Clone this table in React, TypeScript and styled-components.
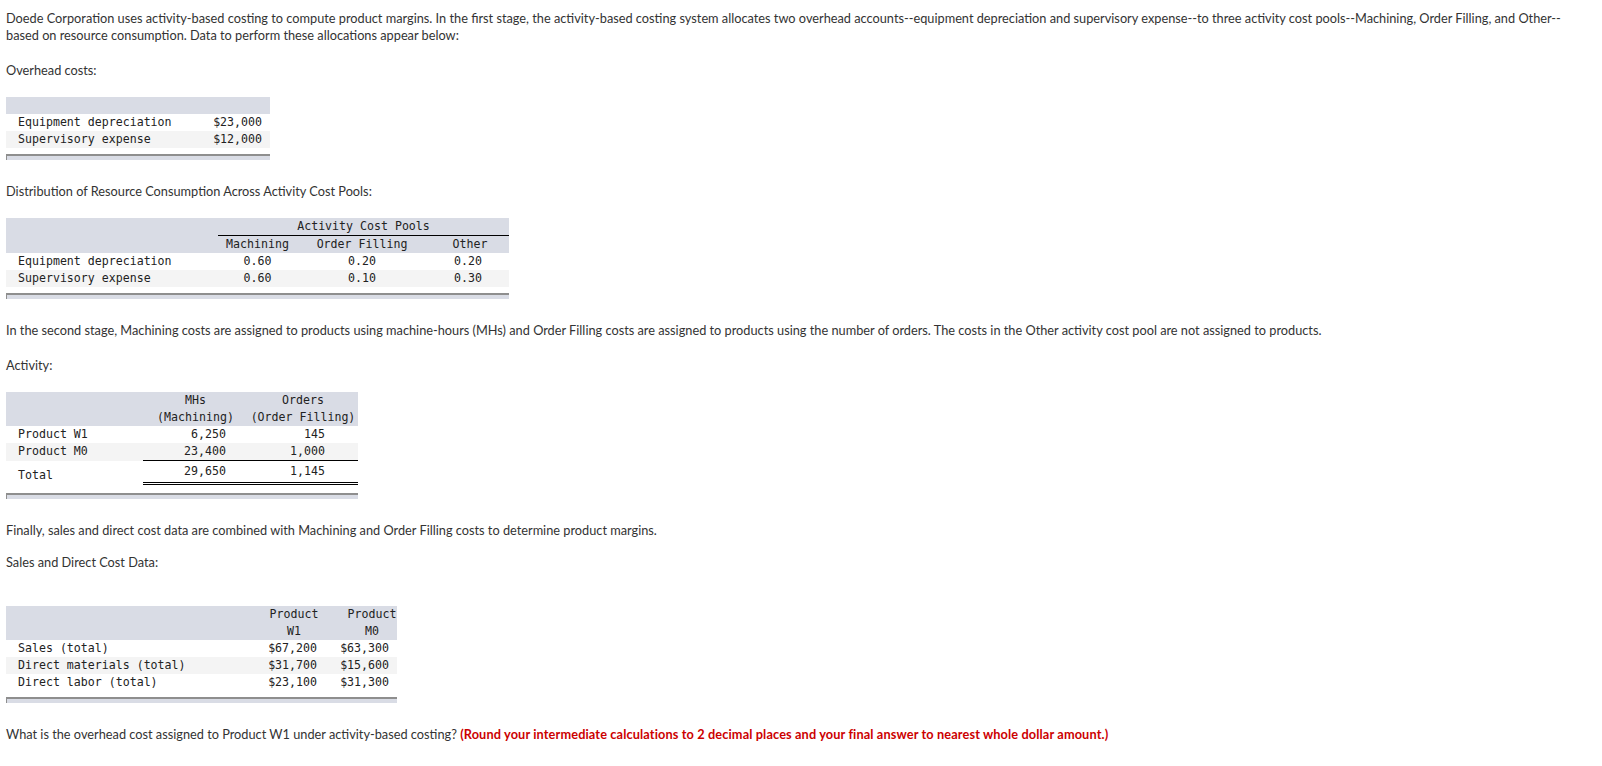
import React from 'react';
import styled, { createGlobalStyle } from 'styled-components';

const GlobalStyle = createGlobalStyle`
  html, body {
    margin: 0;
    padding: 0;
    background: #fff;
  }
  body {
    font-family: Lato, "Liberation Sans", Arial, sans-serif;
    color: #333;
  }
`;

const Page = styled.div`
  padding: 10px 24px 20px 6px;
`;

const Para = styled.p<{ $after?: number }>`
  margin: 0 0 ${(p) => (p.$after ?? 18)}px;
  font-size: 12.75px;
  line-height: 17px;
`;

const Warn = styled.span`
  color: #c00;
  font-weight: 700;
  letter-spacing: 0.12px;
`;

const TableBlock = styled.div`
  margin-bottom: 23px;
`;

const DataTable = styled.table<{ $width: number }>`
  border-collapse: collapse;
  border-spacing: 0;
  table-layout: fixed;
  width: ${(p) => p.$width}px;
  font-family: "DejaVu Sans Mono", "Liberation Mono", monospace;
  font-size: 11.6px;
  color: #222;
`;

const Col = styled.col<{ $w: number }>`
  width: ${(p) => p.$w}px;
`;

const HeadRow = styled.tr`
  background: #d9dce5;
`;

const BodyRow = styled.tr<{ $shade?: boolean }>`
  background: ${(p) => (p.$shade ? '#f4f4f4' : '#fff')};
`;

const Cell = styled.td<{
  $align?: 'left' | 'right' | 'center';
  $padL?: number;
  $padR?: number;
  $rule?: 'single' | 'double' | 'none';
}>`
  height: 17px;
  padding: 0 ${(p) => p.$padR ?? 0}px 0 ${(p) => p.$padL ?? 0}px;
  line-height: 17px;
  text-align: ${(p) => p.$align ?? 'left'};
  white-space: nowrap;
  box-sizing: border-box;
  border-bottom: ${(p) =>
    p.$rule === 'single' ? '1px solid #000' : p.$rule === 'double' ? '3px double #000' : '0'};
`;

const Label = styled(Cell)`
  padding-left: 12px;
`;

const TotalLabel = styled(Label)`
  height: 23px;
  vertical-align: top;
  padding-top: 6px;
  line-height: 17px;
`;

const TotalCell = styled(Cell)`
  height: 23px;
  vertical-align: top;
  padding-top: 2px;
  line-height: 17px;
`;

const TableFoot = styled.div<{ $width: number; $gap?: number }>`
  width: ${(p) => p.$width}px;
  height: 6px;
  margin-top: ${(p) => p.$gap ?? 6}px;
  box-sizing: border-box;
  background: #d9dce5;
  border-top: 2px solid #8e8e8e;
  border-left: 1px solid #8e8e8e;
`;

function OverheadTable() {
  return (
    <TableBlock>
      <DataTable $width={264}>
        <colgroup>
          <Col $w={190} />
          <Col $w={74} />
        </colgroup>
        <tbody>
          <HeadRow>
            <Cell />
            <Cell />
          </HeadRow>
          <BodyRow>
            <Label>Equipment depreciation</Label>
            <Cell $align="right" $padR={8}>$23,000</Cell>
          </BodyRow>
          <BodyRow $shade>
            <Label>Supervisory expense</Label>
            <Cell $align="right" $padR={8}>$12,000</Cell>
          </BodyRow>
        </tbody>
      </DataTable>
      <TableFoot $width={264} />
    </TableBlock>
  );
}

const pools = [
  { name: 'Equipment depreciation', values: ['0.60', '0.20', '0.20'] },
  { name: 'Supervisory expense', values: ['0.60', '0.10', '0.30'] },
];

function DistributionTable() {
  return (
    <TableBlock>
      <DataTable $width={503}>
        <colgroup>
          <Col $w={212} />
          <Col $w={79} />
          <Col $w={130} />
          <Col $w={82} />
        </colgroup>
        <tbody>
          <HeadRow>
            <Cell rowSpan={2} />
            <Cell colSpan={3} $align="center" $rule="single">
              Activity Cost Pools
            </Cell>
          </HeadRow>
          <HeadRow>
            <Cell $align="center">Machining</Cell>
            <Cell $align="center">Order Filling</Cell>
            <Cell $align="center" $padL={4}>Other</Cell>
          </HeadRow>
          {pools.map((row, i) => (
            <BodyRow key={row.name} $shade={i % 2 === 1}>
              <Label>{row.name}</Label>
              {row.values.map((v, j) => (
                <Cell key={j} $align="center">{v}</Cell>
              ))}
            </BodyRow>
          ))}
        </tbody>
      </DataTable>
      <TableFoot $width={503} />
    </TableBlock>
  );
}

function ActivityTable() {
  return (
    <TableBlock>
      <DataTable $width={352}>
        <colgroup>
          <Col $w={137} />
          <Col $w={105} />
          <Col $w={110} />
        </colgroup>
        <tbody>
          <HeadRow>
            <Cell />
            <Cell $align="center">MHs</Cell>
            <Cell $align="center">Orders</Cell>
          </HeadRow>
          <HeadRow>
            <Cell />
            <Cell $align="center">(Machining)</Cell>
            <Cell $align="center">(Order Filling)</Cell>
          </HeadRow>
          <BodyRow>
            <Label>Product W1</Label>
            <Cell $align="right" $padR={22}>6,250</Cell>
            <Cell $align="right" $padR={33}>145</Cell>
          </BodyRow>
          <BodyRow $shade>
            <Label>Product M0</Label>
            <Cell $align="right" $padR={22} $rule="single">23,400</Cell>
            <Cell $align="right" $padR={33} $rule="single">1,000</Cell>
          </BodyRow>
          <BodyRow>
            <TotalLabel>Total</TotalLabel>
            <TotalCell $align="right" $padR={22} $rule="double">29,650</TotalCell>
            <TotalCell $align="right" $padR={33} $rule="double">1,145</TotalCell>
          </BodyRow>
        </tbody>
      </DataTable>
      <TableFoot $width={352} $gap={8} />
    </TableBlock>
  );
}

const salesRows = [
  { name: 'Sales (total)', w1: '$67,200', m0: '$63,300' },
  { name: 'Direct materials (total)', w1: '$31,700', m0: '$15,600' },
  { name: 'Direct labor (total)', w1: '$23,100', m0: '$31,300' },
];

function SalesTable() {
  return (
    <TableBlock>
      <DataTable $width={391}>
        <colgroup>
          <Col $w={257} />
          <Col $w={62} />
          <Col $w={72} />
        </colgroup>
        <tbody>
          <HeadRow>
            <Cell />
            <Cell $align="center">Product</Cell>
            <Cell $align="center" $padL={22}>Product</Cell>
          </HeadRow>
          <HeadRow>
            <Cell />
            <Cell $align="center">W1</Cell>
            <Cell $align="center" $padL={22}>M0</Cell>
          </HeadRow>
          {salesRows.map((row, i) => (
            <BodyRow key={row.name} $shade={i % 2 === 1}>
              <Label>{row.name}</Label>
              <Cell $align="right" $padR={8}>{row.w1}</Cell>
              <Cell $align="right" $padR={8}>{row.m0}</Cell>
            </BodyRow>
          ))}
        </tbody>
      </DataTable>
      <TableFoot $width={391} />
    </TableBlock>
  );
}

export default function App() {
  return (
    <>
      <GlobalStyle />
      <Page>
        <Para>
          Doede Corporation uses activity-based costing to compute product margins. In the first stage, the
          activity-based costing system allocates two overhead accounts--equipment depreciation and supervisory
          expense--to three activity cost pools--Machining, Order Filling, and Other--based on resource consumption.
          Data to perform these allocations appear below:
        </Para>
        <Para>Overhead costs:</Para>
        <OverheadTable />

        <Para>Distribution of Resource Consumption Across Activity Cost Pools:</Para>
        <DistributionTable />

        <Para>
          In the second stage, Machining costs are assigned to products using machine-hours (MHs) and Order Filling
          costs are assigned to products using the number of orders. The costs in the Other activity cost pool are not
          assigned to products.
        </Para>
        <Para>Activity:</Para>
        <ActivityTable />

        <Para $after={15}>
          Finally, sales and direct cost data are combined with Machining and Order Filling costs to determine product
          margins.
        </Para>
        <Para $after={35}>Sales and Direct Cost Data:</Para>
        <SalesTable />

        <Para>
          What is the overhead cost assigned to Product W1 under activity-based costing?{' '}
          <Warn>
            (Round your intermediate calculations to 2 decimal places and your final answer to nearest whole dollar
            amount.)
          </Warn>
        </Para>
      </Page>
    </>
  );
}
